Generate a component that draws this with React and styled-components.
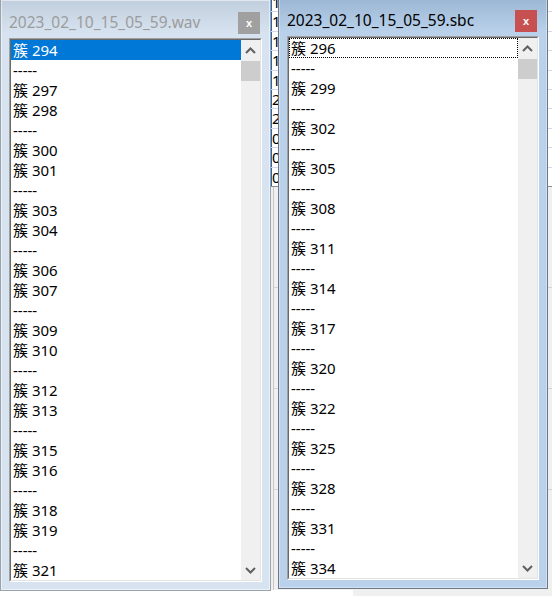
import React from "react";
import styled, { createGlobalStyle, css } from "styled-components";

const wavItems = [
  "簇 294", "-----", "簇 297", "簇 298", "-----", "簇 300", "簇 301", "-----",
  "簇 303", "簇 304", "-----", "簇 306", "簇 307", "-----", "簇 309", "簇 310",
  "-----", "簇 312", "簇 313", "-----", "簇 315", "簇 316", "-----", "簇 318",
  "簇 319", "-----", "簇 321"
];

const sbcItems = [
  "簇 296", "-----", "簇 299", "-----", "簇 302", "-----", "簇 305", "-----",
  "簇 308", "-----", "簇 311", "-----", "簇 314", "-----", "簇 317", "-----",
  "簇 320", "-----", "簇 322", "-----", "簇 325", "-----", "簇 328", "-----",
  "簇 331", "-----", "簇 334"
];

// first digits of the app sitting behind the two windows (only a sliver shows)
const backRows = ["1", "1", "1", "1", "1", "2", "2", "0", "0", "0"];

const GlobalStyle = createGlobalStyle`
  html, body {
    margin: 0;
    padding: 0;
    overflow: hidden;
  }
`;

const Chevron = ({ down }) => (
  <svg width="11" height="7" viewBox="0 0 11 7">
    <polyline
      points={down ? "1,1 5.5,5.5 10,1" : "1,6 5.5,1.5 10,6"}
      fill="none"
      stroke="#606060"
      strokeWidth="2"
    />
  </svg>
);

function ListWindow({ title, items, active, x, y, selectedIndex, focusIndex }) {
  return (
    <Frame $active={active} $x={x} $y={y}>
      <TitleBar>
        <TitleText $active={active}>{title}</TitleText>
        <CloseButton $active={active}>x</CloseButton>
      </TitleBar>
      <ListBox>
        <ListInner>
          <Items>
            {items.map((item, i) => (
              <Item
                key={i}
                $selected={i === selectedIndex}
                $focused={i === focusIndex}
              >
                {item}
              </Item>
            ))}
          </Items>
          <ScrollBar>
            <ArrowButton>
              <Chevron />
            </ArrowButton>
            <Thumb />
            <Track />
            <ArrowButton>
              <Chevron down />
            </ArrowButton>
          </ScrollBar>
        </ListInner>
      </ListBox>
    </Frame>
  );
}

export default function App() {
  return (
    <>
      <GlobalStyle />
      <Desktop>
        <BackApp>
          <DataGrid>
            {backRows.map((v, i) => (
              <DataRow key={i}>
                <DataCell />
                <DataCell $value>{v}</DataCell>
              </DataRow>
            ))}
          </DataGrid>
          <LowerPane>
            <PaneLine />
            <PaneLine />
            <PaneLine />
          </LowerPane>
          <StatusStrip />
        </BackApp>

        <ListWindow
          title="2023_02_10_15_05_59.wav"
          items={wavItems}
          x={0}
          y={-1}
          selectedIndex={0}
        />
        <ListWindow
          title="2023_02_10_15_05_59.sbc"
          items={sbcItems}
          active
          x={278}
          y={-3}
          focusIndex={0}
        />
      </Desktop>
    </>
  );
}

const Desktop = styled.div`
  position: relative;
  width: 552px;
  height: 596px;
  overflow: hidden;
  background: #f0f0f0;
  font-family: "Noto Sans", "Noto Sans CJK SC", sans-serif;
`;

const BackApp = styled.div`
  display: flex;
  flex-direction: column;
  height: 100%;
`;

const DataGrid = styled.div`
  background: #fff;
  height: 186px;
  overflow: hidden;
  border-bottom: 1px solid #8c8c8c;
`;

const DataRow = styled.div`
  display: grid;
  grid-template-columns: 271px 7px 1fr;
  height: 19.4px;
  box-sizing: border-box;
  border-bottom: 1px solid #d6d6f2;
  &:first-child {
    margin-top: -7px;
  }
`;

const DataCell = styled.div`
  font-size: 15px;
  line-height: 19px;
  color: #000;
  overflow: hidden;
  ${(p) =>
    p.$value &&
    css`
      padding-left: 1px;
      box-shadow: inset 1px 0 0 #2a64b0;
    `}
`;

const LowerPane = styled.div`
  flex: 1;
  display: flex;
  flex-direction: column;
  justify-content: space-evenly;
  border-left: 1px solid #c8c8c8;
  margin-left: 273px;
`;

const PaneLine = styled.div`
  height: 1px;
  background: #d4d4d4;
`;

const StatusStrip = styled.div`
  height: 6px;
  width: 353px;
  background: #fff;
`;

const Frame = styled.div`
  position: absolute;
  left: ${(p) => p.$x}px;
  top: ${(p) => p.$y}px;
  width: ${(p) => (p.$active ? 270 : 271)}px;
  height: 592px;
  box-sizing: border-box;
  display: flex;
  flex-direction: column;
  padding: 0 8px 8px;
  border: 1px solid ${(p) => (p.$active ? "#6e7884" : "#9aa2ac")};
  box-shadow: inset 0 0 0 1px
    ${(p) => (p.$active ? "rgba(255,255,255,0.35)" : "rgba(255,255,255,0.5)")};
  background: ${(p) =>
    p.$active
      ? "linear-gradient(#9bb6d4 0px, #b9d1ea 34px, #b9d1ea 100%)"
      : "linear-gradient(#c1cedd 0px, #d7e3f0 34px, #d7e3f0 100%)"};
`;

const TitleBar = styled.div`
  display: flex;
  align-items: flex-end;
  justify-content: space-between;
  height: 38px;
  box-sizing: border-box;
  padding-bottom: 4px;
`;

const TitleText = styled.div`
  font-size: 15.5px;
  line-height: 22px;
  margin-bottom: 1px;
  color: ${(p) => (p.$active ? "#000" : "#9c9c9c")};
  white-space: nowrap;
`;

const CloseButton = styled.div`
  width: 22px;
  height: 22px;
  margin-right: 2px;
  display: grid;
  place-items: center;
  background: ${(p) => (p.$active ? "#c75050" : "#a0a0a0")};
  color: #fff;
  font-family: "Liberation Sans", sans-serif;
  font-weight: 700;
  font-size: 11px;
  line-height: 1;
`;

const ListBox = styled.div`
  flex: 0 0 544px;
  box-sizing: border-box;
  border: 1px solid;
  border-color: #a0a0a0 #ffffff #ffffff #a0a0a0;
`;

const ListInner = styled.div`
  height: 100%;
  box-sizing: border-box;
  display: flex;
  background: #fff;
  border: 1px solid;
  border-color: #696969 #e3e3e3 #e3e3e3 #696969;
`;

const Items = styled.div`
  flex: 1;
  overflow: hidden;
`;

const Item = styled.div`
  height: 20px;
  line-height: 20px;
  padding-left: 2px;
  font-size: 15px;
  color: #000;
  white-space: nowrap;
  ${(p) =>
    p.$selected &&
    css`
      background: #0078d7;
      color: #fff;
    `}
  ${(p) =>
    p.$focused &&
    css`
      outline: 1px dotted #000;
      outline-offset: -1px;
    `}
`;

const ScrollBar = styled.div`
  width: 19px;
  display: flex;
  flex-direction: column;
  background: #f0f0f0;
`;

const ArrowButton = styled.div`
  height: 20px;
  display: grid;
  place-items: center;
`;

const Thumb = styled.div`
  height: 20px;
  margin-top: 1px;
  background: #cdcdcd;
`;

const Track = styled.div`
  flex: 1;
`;
